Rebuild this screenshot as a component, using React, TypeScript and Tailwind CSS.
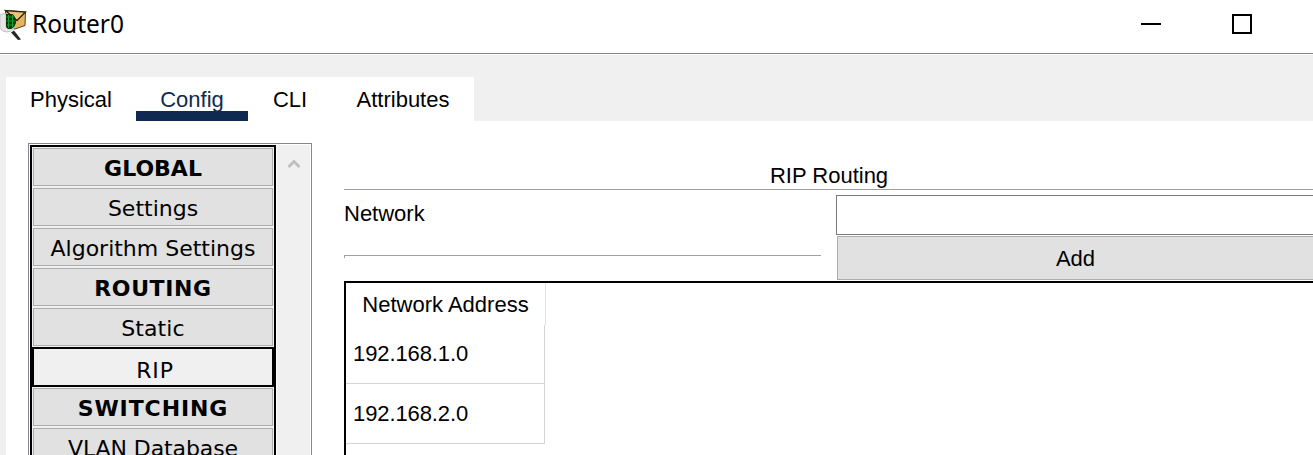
import type { ReactNode } from "react";

function AppIcon() {
  return (
    <svg width="27" height="32" viewBox="0 0 27 32" className="shrink-0">
      <path d="M5.5 2.5 25.5 4 25 17.5 15 21 6 19Z" fill="#e6b45e" stroke="#3a2e16" strokeWidth="0.9" />
      <path d="M5.5 2.5 17 12.5 25.5 4Z" fill="#edc273" stroke="#2b2414" strokeWidth="1.3" />
      <path d="M0 7Q3 5 6 6V19Q9 22 15 19Q12 24 7 24Q2 24 0 20Z" fill="#e6e6e6" stroke="#c2c2c2" strokeWidth="1" />
      <path d="M6 6H12.5Q16 9 16 14Q15.5 19 11 21H8Q6 20 6 18Z" fill="#04330a" />
      <path d="M6.5 9H14M6.5 13H15.5M7 17H14.5M8.5 7V20M12.5 7V19.5" stroke="#1c9c2b" strokeWidth="1.1" />
      <path d="M11 24.5 14 22.5 21 31.5 18 32Z" fill="#262626" />
    </svg>
  );
}

function Tab({ label, width, active = false }: { label: string; width: string; active?: boolean }) {
  return (
    <div className={`flex h-11 flex-col ${width}`}>
      <div
        className={`h-[34px] pt-[10px] text-center leading-[25px] whitespace-nowrap ${active ? "text-[#0f2a52]" : "text-black"}`}
      >
        {label}
      </div>
      {active && <div className="h-[10px] bg-[#0f2950]" />}
    </div>
  );
}

const items = [
  { label: "GLOBAL", heading: true, spacing: "tracking-[0px]" },
  { label: "Settings", spacing: "tracking-[0px]" },
  { label: "Algorithm Settings", spacing: "tracking-[0px]" },
  { label: "ROUTING", heading: true, spacing: "tracking-[0.6px]" },
  { label: "Static", spacing: "tracking-[0.1px]" },
  { label: "RIP", selected: true, spacing: "ml-[4px] tracking-[0.8px]" },
  { label: "SWITCHING", heading: true, spacing: "tracking-[0.9px]" },
  { label: "VLAN Database", spacing: "tracking-[-0.1px]" },
];

function Sidebar() {
  return (
    <div className="flex h-[320px] w-[284px] shrink-0 border border-[#828790] bg-white p-px font-['DejaVu_Sans',sans-serif] text-[22px]">
      <div className="w-[246px] border-2 border-black bg-[#f0f0f0]">
        {items.map((item) =>
          item.selected ? (
            <div key={item.label} className="h-10 border-2 border-black pt-[2px] text-center leading-[40px]">
              <span className={item.spacing}>{item.label}</span>
            </div>
          ) : (
            <div key={item.label} className="h-10 p-px">
              <div
                className={`h-[38px] border border-[#adadad] bg-[#e1e1e1] text-center leading-[40px] whitespace-nowrap ${item.heading ? "font-bold" : ""}`}
              >
                <span className={item.spacing}>{item.label}</span>
              </div>
            </div>
          ),
        )}
      </div>
      <div className="ml-px flex w-[33px] justify-center bg-[#f0f0f0] pt-[13px]">
        <svg width="12" height="11" viewBox="0 0 12 11">
          <path d="M0.5 9 6 3.5 11.5 9" fill="none" stroke="#bfbfbf" strokeWidth="2.8" />
        </svg>
      </div>
    </div>
  );
}

function Cell({ children, size }: { children: ReactNode; size: string }) {
  return (
    <div className={`w-[199px] border-r border-b border-[#d4d4d4] pl-[7px] tracking-[-0.1px] ${size}`}>
      {children}
    </div>
  );
}

export default function App() {
  return (
    <div className="flex h-[455px] w-[1313px] flex-col overflow-hidden bg-[#f0f0f0] font-['Liberation_Sans',Arial,sans-serif] text-[22px] text-black">
      <header className="flex h-[54px] shrink-0 border-b border-[#83868f] bg-white">
        <div className="flex pt-[8px]">
          <AppIcon />
          <h1 className="ml-[5px] font-['Noto_Sans',sans-serif] text-[24.5px] leading-[31px]">Router0</h1>
        </div>
        <div className="mr-[61px] ml-auto flex gap-[71px]">
          <div className="mt-[23px] h-[2px] w-5 bg-black" />
          <div className="mt-[14px] size-5 border-2 border-black" />
        </div>
      </header>
      <div className="flex grow flex-col border-t border-white pt-[22px] pl-[6px]">
        <nav className="flex h-11 w-[468px] shrink-0 bg-white">
          <Tab label="Physical" width="w-[130px]" />
          <Tab label="Config" width="w-[112px]" active />
          <Tab label="CLI" width="w-[84px]" />
          <Tab label="Attributes" width="w-[142px]" />
        </nav>
        <main className="flex h-[334px] bg-white pt-[22px] pl-[22px]">
          <Sidebar />
          <section className="ml-8 flex w-[969px] shrink-0 flex-col">
            <div className="h-[47px] border-b border-[#a0a0a0] pt-5 leading-[25px]">
              <h2 className="w-[970px] text-center">RIP Routing</h2>
            </div>
            <div className="flex h-[91px]">
              <div className="w-[477px]">
                <div className="h-[65px] pt-[11px] leading-[25px]">Network</div>
                <div className="h-[3px] border-t border-l border-[#a0a0a0]" />
              </div>
              <div className="ml-[15px] w-[477px] pt-[5px]">
                <input
                  aria-label="Network"
                  className="block h-10 w-[478px] border border-r-0 border-[#7a7a7a] bg-white px-2 outline-none"
                />
                <button className="mt-px ml-px block h-11 w-[476px] border border-r-0 border-[#adadad] bg-[#e1e1e1] pt-px leading-[42px]">
                  Add
                </button>
              </div>
            </div>
            <div className="h-[174px] border-t-2 border-l-2 border-black">
              <div className="h-[42px] w-[200px] border-r border-[#e3e3e3] text-center leading-[43px]">
                Network Address
              </div>
              <Cell size="h-[59px] leading-[57px]">192.168.1.0</Cell>
              <Cell size="h-[60px] leading-[59px]">192.168.2.0</Cell>
            </div>
          </section>
        </main>
      </div>
    </div>
  );
}
